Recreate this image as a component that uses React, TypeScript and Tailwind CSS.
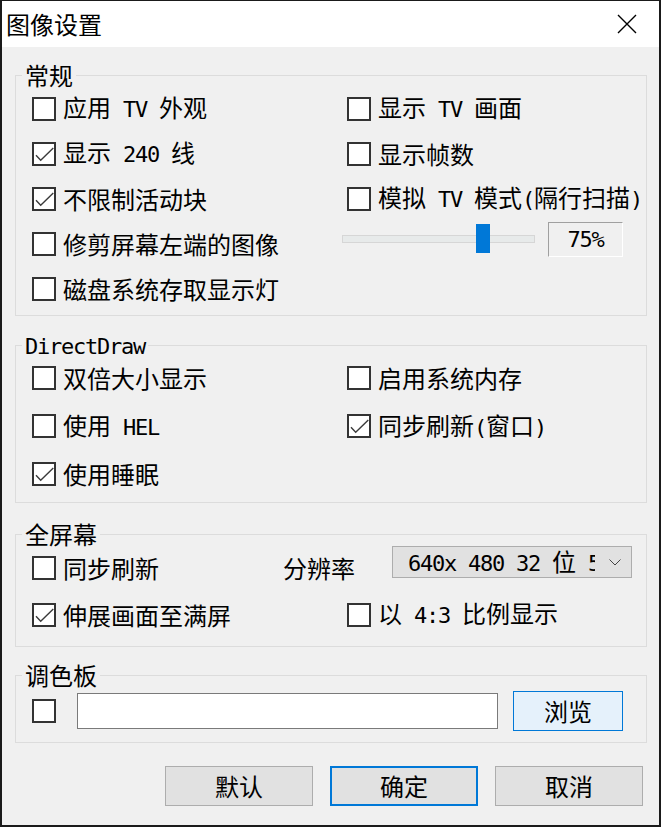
import type { ReactNode } from "react";

// Latin runs are drawn half-width (12px per char) next to 24px CJK glyphs
const ASCII_RUN = /([\x20-\x7e]+)/;
const IS_ASCII = /^[\x20-\x7e]+$/;

function Txt({ text }: { text: string }) {
  return (
    <>
      {text
        .split(ASCII_RUN)
        .filter(Boolean)
        .map((part, i) =>
          IS_ASCII.test(part) ? (
            <span
              key={i}
              className="whitespace-pre font-['DejaVu_Sans_Mono'] text-[22px] tracking-[-1.24px]"
            >
              {part}
            </span>
          ) : (
            <span key={i}>{part}</span>
          )
        )}
    </>
  );
}

function Box({ checked = false }: { checked?: boolean }) {
  return (
    <span className="relative block h-[24px] w-[24px] shrink-0 border-2 border-[#333333] bg-white">
      {checked && (
        <svg viewBox="0 0 20 20" className="absolute left-0 top-0 h-[20px] w-[20px]">
          <path
            d="M2 11.3 L6.7 16.3 L19.3 4"
            fill="none"
            stroke="#3a3a3a"
            strokeWidth="1.4"
          />
        </svg>
      )}
    </span>
  );
}

function Check({ label, checked }: { label: string; checked?: boolean }) {
  return (
    <div className="flex items-center gap-[7px]">
      <Box checked={checked} />
      <span className="whitespace-nowrap">
        <Txt text={label} />
      </span>
    </div>
  );
}

function Group({
  title,
  className = "",
  children,
}: {
  title: string;
  className?: string;
  children: ReactNode;
}) {
  return (
    <div className={`relative border border-[#dcdcdc] ${className}`}>
      <span className="absolute left-[6px] top-[-1px] -translate-y-1/2 bg-[#f0f0f0] px-[3px] leading-[24px] whitespace-nowrap">
        <Txt text={title} />
      </span>
      {children}
    </div>
  );
}

function Slider({ value }: { value: number }) {
  return (
    <div className="-ml-[5px] flex items-start pt-[1px]">
      <div className="relative h-[35px] w-[193px]">
        <div className="mt-[13px] h-[8px] w-full border border-[#d6d6d6] bg-[#e7eaea]" />
        <div className="absolute left-[134px] top-[2px] h-[29px] w-[14px] bg-[#0078d7]" />
      </div>
      <div className="ml-[13px] flex h-[35px] w-[75px] items-center justify-center border border-b-white border-l-[#a0a0a0] border-r-white border-t-[#a0a0a0] bg-[#f0f0f0]">
        <Txt text={`${value}%`} />
      </div>
    </div>
  );
}

function Combo({ text }: { text: string }) {
  return (
    <div className="mt-[2px] flex h-[32px] w-[240px] items-center self-start border border-[#adadad] bg-[#e1e1e1] pl-[15px]">
      <span className="block w-[187px] overflow-hidden whitespace-nowrap">
        <Txt text={text} />
      </span>
      <svg viewBox="0 0 12 7" className="ml-[14px] h-[7px] w-[12px]">
        <path d="M0.5 0.5 L6 6 L11.5 0.5" fill="none" stroke="#444" strokeWidth="1" />
      </svg>
    </div>
  );
}

function Button({
  label,
  primary = false,
}: {
  label: string;
  primary?: boolean;
}) {
  return (
    <button
      type="button"
      className={`flex h-[40px] w-[148px] items-center justify-center bg-[#e1e1e1] ${
        primary ? "border-2 border-[#0078d7]" : "border border-[#adadad]"
      }`}
    >
      {label}
    </button>
  );
}

export default function App() {
  return (
    <div className="flex h-[827px] w-[661px] flex-col border-b-2 border-l-2 border-r-2 border-t border-[#1a1a1a] bg-[#f0f0f0] font-['Noto_Sans_CJK_SC',sans-serif] text-[24px] leading-[28px] text-black">
      {/* title bar */}
      <div className="flex h-[46px] shrink-0 items-center justify-between bg-white pl-[4px] pr-[22px]">
        <span>图像设置</span>
        <svg viewBox="0 0 20 20" className="h-[20px] w-[20px]">
          <path d="M1 1 L19 19 M19 1 L1 19" stroke="#000" strokeWidth="1.4" fill="none" />
        </svg>
      </div>

      <div className="flex flex-1 flex-col pl-[13px] pr-[12px] pt-[28px]">
        <Group title="常规">
          <div className="grid auto-rows-[45px] grid-cols-[315px_1fr] items-center pb-[4px] pl-[16px] pt-[10px]">
            <Check label="应用 TV 外观" />
            <Check label="显示 TV 画面" />
            <Check label="显示 240 线" checked />
            <Check label="显示帧数" />
            <Check label="不限制活动块" checked />
            <Check label="模拟 TV 模式(隔行扫描)" />
            <Check label="修剪屏幕左端的图像" />
            <div className="self-start">
              <Slider value={75} />
            </div>
            <Check label="磁盘系统存取显示灯" />
          </div>
        </Group>

        <Group title="DirectDraw" className="mt-[29px]">
          <div className="grid grid-cols-[315px_1fr] grid-rows-[48px_48px_47px] items-center pb-[5px] pl-[16px] pt-[8px]">
            <Check label="双倍大小显示" />
            <Check label="启用系统内存" />
            <Check label="使用 HEL" />
            <Check label="同步刷新(窗口)" checked />
            <Check label="使用睡眠" checked />
          </div>
        </Group>

        <Group title="全屏幕" className="mt-[31px]">
          <div className="flex flex-col pb-[8px] pl-[16px] pt-[9px]">
            <div className="flex h-[47px] items-center">
              <div className="w-[251px]">
                <Check label="同步刷新" />
              </div>
              <span className="w-[109px]">分辨率</span>
              <Combo text="640x 480 32 位 59Hz" />
            </div>
            <div className="grid h-[47px] grid-cols-[315px_1fr] items-center">
              <Check label="伸展画面至满屏" checked />
              <Check label="以 4:3 比例显示" />
            </div>
          </div>
        </Group>

        <Group title="调色板" className="mt-[28px]">
          <div className="flex h-[48px] items-center pl-[16px] mt-[11px] mb-[7px]">
            <Box />
            <div className="ml-[21px] h-[36px] w-[421px] border border-[#7a7a7a] bg-white" />
            <button
              type="button"
              className="ml-[15px] flex h-[40px] w-[110px] items-center justify-center border border-[#0078d7] bg-[#e5f1fb]"
            >
              浏览
            </button>
          </div>
        </Group>

        <div className="mt-[23px] flex justify-end gap-[17px] pr-[4px]">
          <Button label="默认" />
          <Button label="确定" primary />
          <Button label="取消" />
        </div>
      </div>
    </div>
  );
}
